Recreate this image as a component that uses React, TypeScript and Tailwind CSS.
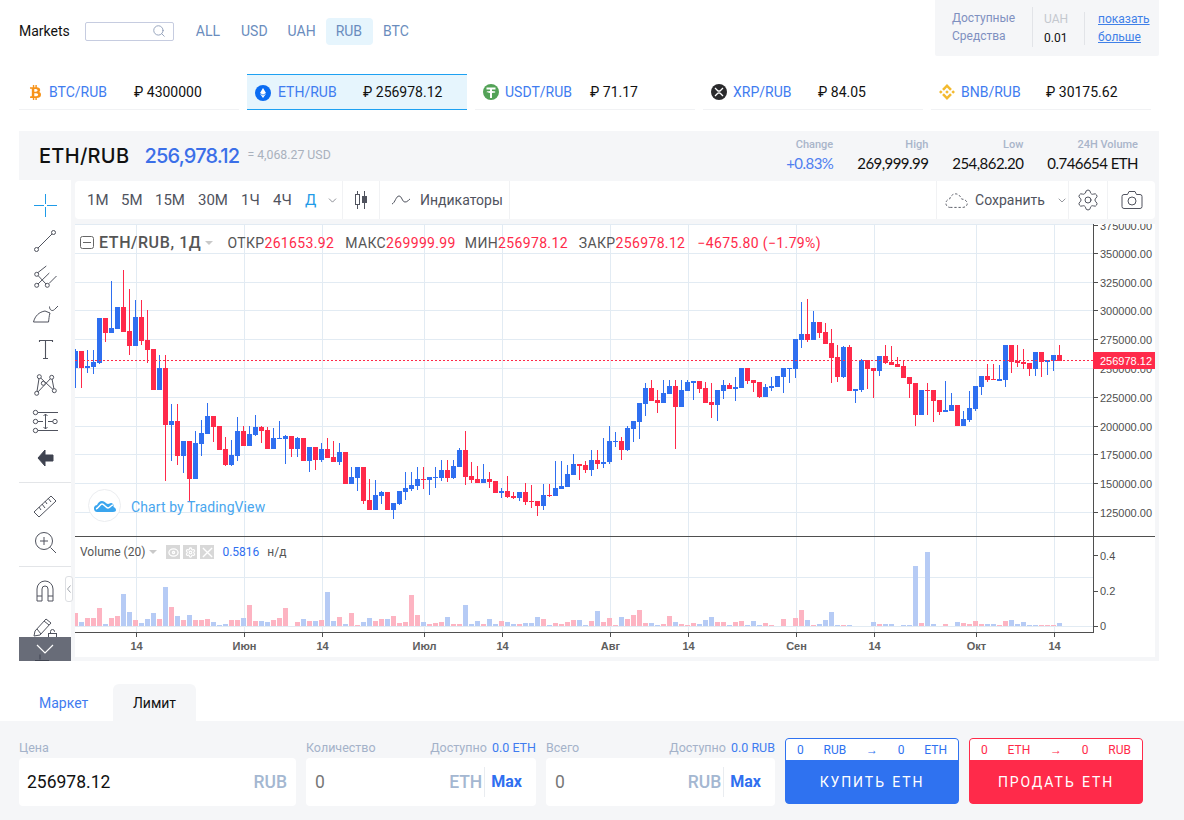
import { ChevronDown, Search, Settings } from 'lucide-react'
import { FaBtc } from 'react-icons/fa'
import { SiBinance } from 'react-icons/si'

type Row = [number, number, number, number, number]

// candle rows: [blue?, wick top, body top, body bottom, wick bottom], in 3x units from y0
const seg = (y0: number, rows: Row[]) =>
  rows.map(([up, hi, top, bot, lo]) => ({
    up: up === 1,
    hi: y0 + hi / 3,
    top: y0 + top / 3,
    bot: y0 + bot / 3,
    lo: y0 + lo / 3,
  }))

const candles = [
  ...seg(260, [
    [1,267,272,323,383],[0,272,272,323,383],[1,270,318,323,338],[1,270,306,321,341],[1,174,174,308,311],
    [0,174,174,218,245],[1,63,204,218,218],[1,141,141,206,206],[0,30,141,215,215],[0,87,213,257,285],
    [1,120,171,257,257],[0,120,171,242,254],[0,150,240,269,308],[0,267,267,389,389],[1,285,324,389,389],
    [0,285,324,494,662],[1,432,484,494,603],[0,432,484,587,615],[1,543,543,587,638],[0,543,543,656,723],
    [1,513,549,656,656],[1,480,519,552,587],[1,429,468,521,521],[0,468,468,500,546],[0,498,498,569,569],
    [0,531,567,614,617],[1,540,585,615,617],[1,471,513,587,602],[0,498,513,557,558],[1,498,522,557,557],
    [1,465,501,525,528],[0,498,501,513,549],[0,501,510,567,567],[1,504,534,567,567],[1,483,534,537,537],
    [1,525,528,537,613],[0,528,528,567,591],[1,531,534,567,591],
  ]),
  ...seg(230, [
    [0,624,624,692,692],[1,651,651,692,725],[0,651,651,690,719],[1,639,657,690,695],[0,624,657,684,684],
    [0,633,681,696,696],[1,639,666,696,705],[0,666,666,762,762],[1,711,741,762,762],[1,711,711,744,783],
    [0,711,711,813,822],[0,747,810,840,840],[1,750,795,840,840],[1,783,786,798,822],[0,786,786,840,840],
    [1,819,819,840,867],[1,783,783,822,825],[1,726,774,786,810],[1,726,765,777,783],[1,711,747,768,780],
    [0,711,747,750,777],[1,741,741,750,795],[1,711,741,744,774],[1,690,720,744,753],[0,690,720,744,756],
    [1,690,708,744,747],[1,654,660,711,711],[0,603,660,741,765],[0,696,738,750,759],[0,708,747,759,759],
    [1,702,747,759,759],[0,726,747,756,774],[0,753,753,789,789],[1,774,783,789,804],[0,738,783,801,804],
    [0,786,798,804,807],[1,786,786,804,813],[0,759,786,816,825],[0,765,813,816,834],[0,813,813,828,858],
    [1,762,795,828,840],[0,762,795,798,801],[1,693,774,798,798],[1,693,768,777,777],[1,705,732,771,771],
    [1,672,702,735,735],[0,702,702,708,750],[0,693,705,720,729],[1,660,690,720,738],[0,660,690,702,717],
  ]),
  ...seg(290, [
    [1,444,516,522,534],[1,408,453,516,522],[1,426,453,456,471],[0,441,453,480,510],[1,408,414,480,483],
    [1,393,393,417,456],[1,339,339,396,447],[1,279,294,342,378],[0,270,294,333,333],[0,300,330,339,369],
    [1,270,309,339,339],[1,270,288,312,312],[0,270,288,351,477],[1,270,300,351,351],[1,270,276,303,303],
    [1,273,273,279,330],[0,273,273,297,309],[0,276,294,339,339],[0,279,336,345,384],[1,300,300,345,393],
    [1,270,285,303,327],[0,279,285,297,297],[1,261,291,297,333],[1,234,234,294,294],[0,234,234,273,282],
    [0,270,270,279,306],[0,276,276,321,324],[1,282,291,321,321],[1,261,288,294,303],[1,258,258,291,291],
    [1,234,234,261,309],[1,234,234,237,279],[1,147,147,237,264],[1,36,132,150,174],[0,27,132,150,156],
    [1,63,96,150,150],[0,96,96,129,144],[0,99,126,162,162],[0,117,159,204,279],[0,165,201,261,276],
    [1,168,171,261,264],[0,165,171,303,303],[1,297,297,303,339],[1,207,210,300,306],[0,210,210,237,297],
    [0,234,234,243,324],[1,198,198,243,258],[0,165,198,219,222],[0,168,216,225,225],
  ]),
  ...seg(220, [
    [0,411,432,441,441],[0,420,438,474,474],[0,471,471,492,534],[0,489,489,585,618],[1,510,510,585,585],
    [0,489,510,513,585],[0,510,510,543,606],[0,540,540,576,585],[1,483,570,576,576],[1,519,555,573,573],
    [0,555,555,618,618],[1,573,597,618,618],[1,513,564,600,606],[1,498,498,567,573],[1,468,468,501,525],
    [0,432,468,480,486],[0,432,477,480,480],[1,435,477,483,483],[1,375,375,480,501],[0,375,375,426,459],
    [0,375,423,429,441],[0,387,426,432,447],[0,429,429,447,468],[1,396,396,447,468],[0,396,396,426,471],
    [1,420,420,426,465],[1,405,405,423,453],[0,375,405,423,423],
  ]),
]

// volume heights in 3x units, negative = down bar
const volumes = [
  -40,13,-25,-25,-55,7,-25,-31,97,43,-19,10,22,40,-22,118,-58,31,-19,34,-19,-19,-22,13,4,7,-19,-19,25,-64,-16,16,13,-19,-25,-55,0,-13,
  20,-14,14,-17,101,14,-26,5,-38,-2,11,23,-14,-20,20,-29,-8,-11,-92,-32,11,-5,-8,-11,26,-5,-5,62,5,14,-5,20,5,-14,11,5,-5,8,8,26,-20,2,-8,-5,-11,-17,17,2,-14,44,-11,-23,-2,26,-20,-32,-47,-8,8,2,-5,-29,11,-5,-2,-8,5,17,26,-11,-11,2,-11,-14,2,14,2,-8,-2,0,-20,0,-23,-47,17,-2,5,17,41,2,-2,2,0,0,0,11,-5,5,5,
  0,2,2,179,-8,221,5,0,-5,0,11,-8,-5,-14,-5,5,5,-2,-14,17,5,11,2,2,-2,-2,-2,8,
]

const gridY = [253, 282, 310, 339, 368, 397, 426, 454, 483, 512]
const prices = ['350000.00','325000.00','300000.00','275000.00','250000.00','225000.00','200000.00','175000.00','150000.00','125000.00']
const gridX: [number, string][] = [[136,'14'],[244,'Июн'],[322,'14'],[424,'Июл'],[502,'14'],[610,'Авг'],[688,'14'],[796,'Сен'],[874,'14'],[976,'Окт'],[1054,'14']]

const BLUE = '#2f6ff0'
const RED = '#ff2a4a'

function Chart() {
  return (
    <svg viewBox="75 224 1080 433" className="block h-[433px] w-[1080px]">
      <rect x="75" y="224" width="1080" height="433" fill="#fff" />
      <g fill="#e2ebf3" shapeRendering="crispEdges">
        <rect x="75" y="224" width="1018" height="1" />
        {gridY.map((y) => <rect key={y} x="75" y={y} width="1018" height="1" />)}
        <rect x="75" y="577" width="1018" height="1" />
        <rect x="75" y="626" width="1018" height="1" />
        {gridX.map(([x]) => <rect key={x} x={x} y="224" width="1" height="408" />)}
      </g>

      <g shapeRendering="crispEdges">
        {candles.map((c, i) => {
          const fill = c.up ? BLUE : RED
          return (
            <g key={i} fill={fill}>
              <rect x={75 + 6 * i} y={c.hi} width="1" height={c.lo - c.hi} />
              <rect x={73 + 6 * i} y={c.top} width="5" height={Math.max(c.bot - c.top, 1)} />
            </g>
          )
        })}
        {volumes.map((v, i) =>
          v === 0 ? null : (
            <rect key={i} x={73 + 6 * i} y={626 - Math.abs(v) / 3} width="5" height={Math.abs(v) / 3} fill={v > 0 ? '#b6cbf5' : '#fdb4c2'} />
          ),
        )}
        <line x1="75" y1="360.5" x2="1093" y2="360.5" stroke={RED} strokeDasharray="2 2" />
        <rect x="75" y="536" width="1080" height="1" fill="#4f4f4f" />
        <rect x="1093" y="224" width="1" height="408" fill="#4f4f4f" />
        <rect x="75" y="632" width="1019" height="1" fill="#4f4f4f" />
        <g fill="#4f4f4f">
          {[225, ...gridY].map((y) => <rect key={y} x="1094" y={y} width="4" height="1" />)}
          {[555, 591, 626].map((y) => <rect key={y} x="1094" y={y} width="4" height="1" />)}
          {gridX.map(([x]) => <rect key={x} x={x} y="633" width="1" height="4" />)}
        </g>
      </g>

      <g className="font-['Liberation_Sans',sans-serif] text-[11px]" fill="#4f4f4f">
        <text x="1100" y="230">375000.00</text>
        {prices.filter((p) => p !== '250000.00').map((p) => (
          <text key={p} x="1100" y={gridY[prices.indexOf(p)] + 5}>{p}</text>
        ))}
        <text x="1100" y="560">0.4</text>
        <text x="1100" y="595">0.2</text>
        <text x="1100" y="630">0</text>
        {gridX.map(([x, label]) => (
          <text key={x} x={x + 0.5} y="650" textAnchor="middle" fontWeight="700" fill="#5e5e5e">{label}</text>
        ))}
      </g>

      <text x="1100" y="373" fill="#4f4f4f" className="font-['Liberation_Sans',sans-serif] text-[11px]">250000.00</text>
      <rect x="1093" y="352" width="62" height="17" fill={RED} />
      <text x="1100" y="364.500" fill="#fff" className="font-['Liberation_Sans',sans-serif] text-[11px]">256978.12</text>
    </svg>
  )
}

function Icon({ children }: { children: React.ReactNode }) {
  return (
    <div className="flex h-9 items-center justify-center">
      <svg width="28" height="28" viewBox="0 0 28 28" fill="none" stroke="#50535e" strokeWidth="1">
        {children}
      </svg>
    </div>
  )
}

function LeftTools() {
  return (
    <div className="relative h-[481px] w-[52px] overflow-hidden bg-white pt-[7px]">
      <Icon>
        <path d="M3 14.500h10M16 14.500h10M14.500 3v10M14.500 16v10" stroke="#1f9be8" />
      </Icon>
      <Icon>
        <path d="M7 21L21 7" />
        <circle cx="5.500" cy="22.500" r="2" fill="#fff" />
        <circle cx="22.500" cy="5.500" r="2" fill="#fff" />
      </Icon>
      <Icon>
        <path d="M7 9.500L15.300 3M7 12.500L15 21M7 21L18.300 10M18 20.500L25.500 13" />
        <circle cx="5.700" cy="22.300" r="2" fill="#fff" />
        <circle cx="16.300" cy="22.300" r="2" fill="#fff" />
        <circle cx="5.700" cy="11.300" r="2" fill="#fff" />
      </Icon>
      <Icon>
        <path d="M2.500 23h15M2.500 23C4 17 8 13 14 12L19 14C18 17 18 20 17.500 23M18.500 7.500c0 4 3 5 5 3L27 7" />
      </Icon>
      <Icon>
        <path d="M8.500 7V5.500h13V7M14.500 5.500V23M12 23.500h5" strokeWidth="1.100" />
      </Icon>
      <Icon>
        <path d="M8.300 5.700L5.700 22.300M8.300 5.700L23.300 19.700M20.700 6.300L5.700 22.300M20.700 6.300L23.300 19.700" />
        <circle cx="8.300" cy="5.700" r="2" fill="#fff" />
        <circle cx="20.700" cy="6.300" r="2" fill="#fff" />
        <circle cx="12.300" cy="12.300" r="2" fill="#fff" />
        <circle cx="5.700" cy="22.300" r="2" fill="#fff" />
        <circle cx="23.300" cy="19.700" r="2" fill="#fff" />
      </Icon>
      <Icon>
        <path d="M7 5.500h20M7 14.500h5M17 14.500h5M7 23.500h20M14.500 7v15M12.500 9l2-2 2 2M12.500 20l2 2 2-2" />
        <circle cx="4.500" cy="5.500" r="2.200" fill="#fff" />
        <circle cx="4.500" cy="14.500" r="2.200" fill="#fff" />
        <circle cx="24" cy="14.500" r="2.200" fill="#fff" />
        <circle cx="4.500" cy="23.500" r="2.200" fill="#fff" />
      </Icon>
      <Icon>
        <path d="M14 7L7 15l7 8v-5h8v-6h-8z" fill="#3f4350" stroke="#3f4350" strokeWidth="1" strokeLinejoin="round" />
      </Icon>
      <div className="mt-[7px] mb-[5px] h-px bg-[#e3e5e8]" />
      <Icon>
        <path d="M3 20L20 4l5 5L8 25zM8 15l2 3M11 12l3 4M14 9l2 3M17 6l3 4" />
      </Icon>
      <Icon>
        <circle cx="13" cy="13" r="8.500" />
        <path d="M19.500 19.500L25 25M13 9v8M9 13h8" />
      </Icon>
      <div className="mt-[6px] mb-[5px] h-px bg-[#e3e5e8]" />
      <Icon>
        <path d="M6 25V13a8 8 0 0116 0v12h-5V13a3 3 0 00-6 0v12zM6 20h5M17 20h5" />
      </Icon>
      <Icon>
        <path d="M4 19L15 7l5 4L9 23l-6 1zM6 17l4 5M13 9l5 4" />
        <rect x="17.500" y="21.500" width="8" height="6" fill="#fff" />
        <path d="M19.500 21.500v-2a2 2 0 014 0v.5" />
      </Icon>
      <div className="absolute inset-x-0 bottom-0 flex h-6 justify-center bg-[#686c78]">
        <svg width="20" height="24" viewBox="0 0 20 24" fill="none">
          <path d="M5 17.500v5M0 23.500h14" stroke="#3f4350" />
          <path d="M2 8l8 8 8-8" stroke="#fff" strokeWidth="1.200" />
        </svg>
      </div>
    </div>
  )
}

function Legend() {
  return (
    <div className="absolute left-[5px] top-[10px] flex h-[18px] items-center font-['Roboto',sans-serif] text-[14px] tracking-[0.35px] text-[#555]">
      <svg width="14" height="14" viewBox="0 0 14 14" fill="none" stroke="#666" className="mr-[5px]">
        <rect x="0.500" y="0.500" width="13" height="12" rx="2" />
        <path d="M3 6.500h8" />
      </svg>
      <span className="text-[16px] font-medium tracking-[0.6px]">ETH/RUB, 1Д</span>
      <span className="ml-[4px] mr-[14px] h-0 w-0 border-x-[4px] border-t-[4px] border-x-transparent border-t-[#c9c9c9]" />
      <span>ОТКР</span><span className="text-[#ff2a4a]">261653.92</span>
      <span className="ml-[11px]">МАКС</span><span className="text-[#ff2a4a]">269999.99</span>
      <span className="ml-[9px]">МИН</span><span className="text-[#ff2a4a]">256978.12</span>
      <span className="ml-[11px]">ЗАКР</span><span className="text-[#ff2a4a]">256978.12</span>
      <span className="ml-[12px] text-[#ff2a4a]">−4675.80 (−1.79%)</span>
    </div>
  )
}

function Watermark() {
  return (
    <div className="absolute left-[13px] top-[265px] flex items-center font-['Roboto',sans-serif]">
      <div className="flex h-[33px] w-[33px] items-center justify-center rounded-full border border-[#ebedf0] bg-white">
        <svg width="22" height="14" viewBox="0 0 22 14" fill="#3aa5ee">
          <path d="M4 13a3.500 3.500 0 01-1-7c1-2 2.500-4 5-4 3 0 4 3 6 3 1.500 0 2-1 3-1 2 0 3 2 2.500 4 1.500.5 2.500 1.500 2.500 3 0 1-1 2-3 2z" />
          <path d="M2 10c3-1 4-5 6-5s4 4 6 4 3-3 5-3" fill="none" stroke="#fff" strokeWidth="1.400" />
        </svg>
      </div>
      <span className="ml-[10px] pt-[3px] text-[14px] tracking-[0.1px] text-[#48a6ee]">Chart by TradingView</span>
    </div>
  )
}

function VolumeLegend() {
  return (
    <div className="absolute left-[5px] top-[321px] flex h-[14px] items-center font-['Roboto',sans-serif] text-[12px] text-[#555]">
      <span>Volume (20)</span>
      <span className="ml-[4px] mr-[9px] h-0 w-0 border-x-[4px] border-t-[4px] border-x-transparent border-t-[#c9c9c9]" />
      <span className="mr-[3px] flex h-[14px] w-[14px] items-center justify-center bg-[#d8d8d8]">
        <svg width="11" height="11" viewBox="0 0 12 12" fill="none" stroke="#fff" strokeWidth="1.400"><ellipse cx="6" cy="6" rx="5" ry="4" /><circle cx="6" cy="6" r="1.200" /></svg>
      </span>
      <span className="mr-[3px] flex h-[14px] w-[14px] items-center justify-center bg-[#d8d8d8]">
        <Settings size={11} color="#fff" strokeWidth={2.5} />
      </span>
      <span className="flex h-[14px] w-[14px] items-center justify-center bg-[#d8d8d8]">
        <svg width="11" height="11" viewBox="0 0 12 12" stroke="#fff" strokeWidth="1.500"><path d="M1 1l10 10M11 1L1 11" /></svg>
      </span>
      <span className="ml-[8px] text-[#2f6ff0]">0.5816</span>
      <span className="ml-[8px]">н/д</span>
    </div>
  )
}

function TopTools() {
  return (
    <div className="flex h-[38px] items-stretch rounded-[4px] bg-white font-['Roboto',sans-serif] text-[15px] text-[#50535e]">
      <div className="flex items-center pl-3">
        <span className="w-[34px]">1М</span>
        <span className="w-[34px]">5М</span>
        <span className="w-[43px]">15М</span>
        <span className="w-[43px]">30М</span>
        <span className="w-[32px]">1Ч</span>
        <span className="w-[32px]">4Ч</span>
        <span className="w-[21px] text-[#1f9be8]">Д</span>
        <ChevronDown size={13} strokeWidth={1.2} />
      </div>
      <div className="ml-[3px] flex w-[38px] items-center justify-center border-x border-[#f1f2f4]">
        <svg width="16" height="20" viewBox="0 0 16 20" fill="none" stroke="#50535e">
          <path d="M4.500 1v3M4.500 15v4M11.500 1v5M11.500 13v6" />
          <rect x="2.500" y="4.500" width="4" height="10" />
          <rect x="9.500" y="6.500" width="4" height="6" fill="#50535e" />
        </svg>
      </div>
      <div className="flex w-[130px] items-center border-r border-[#f1f2f4] pl-[11px] text-[14px]">
        <svg width="20" height="12" viewBox="0 0 20 12" fill="none" stroke="#50535e" className="mr-[9px]">
          <path d="M1 10c3-1 4-8 7-8s3 6 6 6 3-2 5-3" />
        </svg>
        Индикаторы
      </div>
      <div className="ml-auto flex w-[133px] items-center border-x border-[#f1f2f4] pl-[8px]">
        <svg width="26" height="22" viewBox="0 0 26 22" fill="none" stroke="#50535e" strokeDasharray="2.500 2" className="mr-[6px]">
          <path d="M6 19a4.500 4.500 0 01-1-9c1-4 5-7 9-5 2 1 3 3 4 5 3 0 6 2 6 5 0 2-2 4-5 4z" />
        </svg>
        <span className="text-[14px]">Сохранить</span>
        <ChevronDown size={13} strokeWidth={1.2} className="ml-[11px]" />
      </div>
      <div className="flex w-[39px] items-center justify-center border-r border-[#f1f2f4]">
        <Settings size={24} strokeWidth={1} />
      </div>
      <div className="flex w-[47px] flex-none items-center justify-center">
        <svg width="22" height="20" viewBox="0 0 22 20" fill="none" stroke="#50535e">
          <path d="M3 4.500h3.500l1.500-3h6l1.500 3H19a2 2 0 012 2v10a2 2 0 01-2 2H3a2 2 0 01-2-2v-10a2 2 0 012-2z" />
          <circle cx="11" cy="11" r="4" />
        </svg>
      </div>
    </div>
  )
}

const tickers = [
  { pair: 'BTC/RUB', price: '4300000', gap: 'w-[85px]', icon: <FaBtc size={15} color="#f7931a" className="ml-[9px] mr-[6px]" /> },
  { pair: 'ETH/RUB', price: '256978.12', gap: 'w-[85px]', active: true, icon: (
    <svg width="16" height="16" viewBox="0 0 16 16" className="ml-[8px] mr-[7px]">
      <circle cx="8" cy="8" r="8" fill="#0b6cf2" />
      <path d="M8 3l3 5-3 1.800L5 8z" fill="#fff" />
      <path d="M5 8.800l3 1.800 3-1.800L8 13z" fill="#fff" />
    </svg>
  ) },
  { pair: 'USDT/RUB', price: '71.17', gap: 'w-[85px]', icon: (
    <svg width="16" height="16" viewBox="0 0 16 16" className="ml-[8px] mr-[6px]">
      <circle cx="8" cy="8" r="8" fill="#53a257" />
      <path d="M3.500 3.500h9v2H9v1.400c2 .1 3.500.5 3.500 1s-1.500.9-3.500 1V14H7V8.900C5 8.800 3.500 8.400 3.500 7.900s1.500-.9 3.500-1V5.500H3.500z" fill="#fff" />
    </svg>
  ) },
  { pair: 'XRP/RUB', price: '84.05', gap: 'w-[85px]', icon: (
    <svg width="16" height="16" viewBox="0 0 16 16" className="ml-[8px] mr-[6px]">
      <circle cx="8" cy="8" r="8" fill="#2a2a2c" />
      <path d="M4 4l2.500 2.500a2 2 0 003 0L12 4M4 12l2.500-2.500a2 2 0 013 0L12 12" fill="none" stroke="#fff" strokeWidth="1.300" />
    </svg>
  ) },
  { pair: 'BNB/RUB', price: '30175.62', gap: 'w-[85px]', icon: <SiBinance size={16} color="#f3ba2f" className="ml-[8px] mr-[6px]" /> },
]

function Ticker({ pair, price, icon, active, gap }: { pair: string; price: string; icon: React.ReactNode; active?: boolean; gap: string }) {
  return (
    <div className={active ? 'flex h-[36px] w-[220px] items-center border-y border-[#1da1f2] bg-[#e6f5fd] pt-px' : 'flex h-[36px] w-[220px] items-center border-b border-[#f1f2f4] pt-px'}>
      {icon}
      <span className={`${gap} text-[14px] text-[#3f7cf0]`}>{pair}</span>
      <span className="text-[14px] text-[#111]">₽ {price}</span>
    </div>
  )
}

function Field({ label, avail, value, unit, max, width, dark }: { label: string; avail?: string; value: string; unit: string; max?: boolean; width: string; dark?: boolean }) {
  return (
    <div className={width}>
      <div className="flex h-[37px] items-end justify-between text-[12.500px] text-[#a4b2c9]">
        <span>{label}</span>
        {avail && (
          <span>
            Доступно <span className="ml-[2px] text-[#3f7cf0]">{avail}</span>
          </span>
        )}
      </div>
      <div className="flex h-[48px] items-center rounded-[4px] bg-white pl-[8px]">
        <span className={dark ? 'flex-1 text-[17.500px] text-[#111]' : 'flex-1 pl-[1px] text-[17.500px] text-[#777]'}>{value}</span>
        <span className="text-[17.500px] font-medium text-[#a4b7d1]">{unit}</span>
        {max ? (
          <span className="ml-[2px] mr-[14px] h-[30px] border-l border-[#e9ecf0] pl-[6px] text-[16px] font-bold leading-[30px] text-[#2f6ff0]">Max</span>
        ) : (
          <span className="w-[9px]" />
        )}
      </div>
    </div>
  )
}

function ActionButton({ title, parts, color, text, border }: { title: string; parts: string[]; color: string; text: string; border: string }) {
  return (
    <div className={`flex h-[66px] w-[174px] flex-col overflow-hidden rounded-[4px] border ${border} ${color}`}>
      <div className={`flex h-[21px] items-center justify-between bg-white px-[11px] text-[12px] ${text}`}>
        {parts.map((p, i) => (
          <span key={i} className={p === '→' ? "font-['Liberation_Sans',sans-serif]" : ''}>{p}</span>
        ))}
      </div>
      <div className="flex flex-1 items-center justify-center pt-[2px] text-[14px] tracking-[1.900px] [word-spacing:1px] text-white">{title}</div>
    </div>
  )
}

function Stat({ label, value, blue }: { label: string; value: string; blue?: boolean }) {
  return (
    <div className="flex flex-col items-end">
      <span className="font-['Roboto',sans-serif] text-[11px] font-medium leading-[14px] text-[#a9b5ca]">{label}</span>
      <span className={blue ? 'mt-[1px] text-[15px] leading-[20px] tracking-[-0.55px] text-[#4f7ff0]' : 'mt-[1px] text-[15px] leading-[20px] tracking-[-0.55px] text-[#111]'}>{value}</span>
    </div>
  )
}

export default function App() {
  return (
    <div className="h-[820px] w-[1184px] overflow-hidden bg-white font-['Roboto',sans-serif]">
      <header className="flex h-[56px]">
        <div className="flex items-center pl-[19px] pt-[6px]">
          <span className="mr-[15px] text-[14px] text-[#111]">Markets</span>
          <div className="mr-[22px] flex h-[19px] w-[89px] items-center justify-end rounded-[2px] border border-[#c6cce0] pr-[7px]">
            <Search size={14} color="#8a99b5" strokeWidth={1.5} />
          </div>
          <div className="flex items-center text-[14px] text-[#6a8cbd]">
            <span className="mr-[21px]">ALL</span>
            <span className="mr-[20px]">USD</span>
            <span className="mr-[10px]">UAH</span>
            <span className="mr-[10px] rounded-[4px] bg-[#e6f5fd] py-[3px] pl-[10px] pr-[11px]">RUB</span>
            <span>BTC</span>
          </div>
        </div>
        <div className="ml-auto mr-[25px] flex h-[56px] w-[224px] rounded-b-[2px] bg-[#f5f6f8] pl-[17px] text-[12px]">
          <div className="my-[7px] h-[40px] w-[81px] border-r border-[#e2e4e8] pt-[2px] leading-[18px] text-[#7f90c0]">
            Доступные<br />Средства
          </div>
          <div className="mt-[12px] h-[33px] w-[52px] border-r border-[#e2e4e8] pl-[11px] leading-[19px]">
            <span className="-mt-[2px] block text-[#c4c8cf]">UAH</span>
            <span className="block text-[#111]">0.01</span>
          </div>
          <div className="ml-[13px] mt-[10px] leading-[18px] text-[#3f80e8] underline">
            показать<br />больше
          </div>
        </div>
      </header>

      <div className="ml-[19px] mt-[18px] flex gap-[8px]">
        {tickers.map((t) => <Ticker key={t.pair} {...t} />)}
      </div>

      <section className="ml-[19px] mt-[21px] flex h-[49px] w-[1140px] items-center bg-[#f5f6f8] pl-[20px] pr-[21px]">
        <span className="font-['Inter',sans-serif] text-[20px] font-medium tracking-[0.3px] text-[#111]">ETH/RUB</span>
        <span className="ml-[15px] font-['Inter',sans-serif] text-[20px] font-medium tracking-[-0.8px] text-[#3b6fe8]">256,978.12</span>
        <span className="ml-[8px] text-[12.300px] text-[#a9b1bd]">= 4,068.27 USD</span>
        <div className="ml-auto flex gap-[24px] font-['Lato',sans-serif]">
          <Stat label="Change" value="+0.83%" blue />
          <Stat label="High" value="269,999.99" />
          <Stat label="Low" value="254,862.20" />
          <Stat label="24H Volume" value="0.746654 ETH" />
        </div>
      </section>

      <section className="relative ml-[19px] flex h-[481px] w-[1140px] bg-[#f5f6f8]">
        <LeftTools />
        <div className="absolute left-[46px] top-[396px] flex h-[26px] w-[8px] items-center justify-center rounded-[3px] border border-[#dddfe3] bg-white">
          <svg width="4" height="8" viewBox="0 0 4 8" fill="none" stroke="#a0a4ac"><path d="M3.500 0.500L0.500 4l3 3.500" /></svg>
        </div>
        <div className="ml-[4px] w-[1080px] pt-px">
          <TopTools />
          <div className="relative mt-[5px]">
            <Chart />
            <Legend />
            <Watermark />
            <VolumeLegend />
          </div>
        </div>
      </section>

      <div className="ml-[19px] mt-[23px] flex h-[37px] items-stretch text-[14px]">
        <span className="flex w-[94px] items-center pl-[20px] pt-[2px] text-[#3f7cf0]">Маркет</span>
        <span className="flex w-[83px] items-center justify-center rounded-t-[6px] bg-[#f5f6f8] pt-[2px] text-[#111]">Лимит</span>
      </div>

      <section className="flex h-[99px] bg-[#f5f6f8] pl-[19px]">
        <div className="flex gap-[10px]">
          <Field label="Цена" value="256978.12" unit="RUB" width="w-[277px]" dark />
          <Field label="Количество" avail="0.0 ETH" value="0" unit="ETH" max width="w-[230px]" />
          <Field label="Всего" avail="0.0 RUB" value="0" unit="RUB" max width="w-[229px]" />
        </div>
        <div className="ml-[10px] mt-[17px] flex gap-[10px]">
          <ActionButton title="КУПИТЬ ETH" parts={['0', 'RUB', '→', '0', 'ETH']} color="bg-[#2f72f0]" text="text-[#2f72f0]" border="border-[#2f72f0]" />
          <ActionButton title="ПРОДАТЬ ETH" parts={['0', 'ETH', '→', '0', 'RUB']} color="bg-[#ff2a4a]" text="text-[#ff2a4a]" border="border-[#ff2a4a]" />
        </div>
      </section>
    </div>
  )
}
